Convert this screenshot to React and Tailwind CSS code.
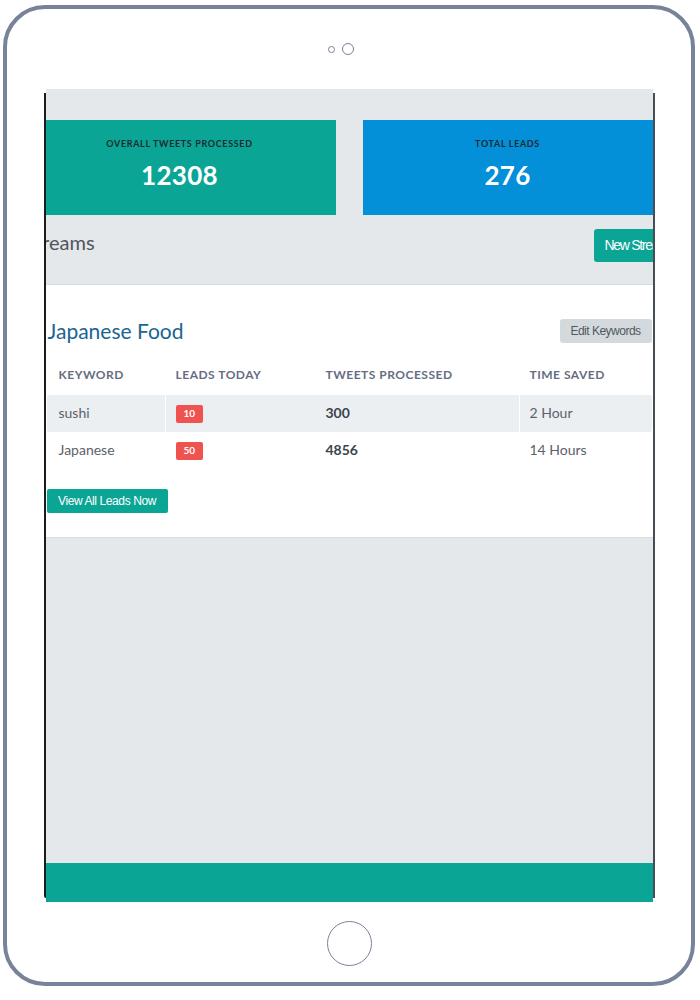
const stats = [
  { label: 'OVERALL TWEETS PROCESSED', value: '12308', cls: 'bg-[#0ba596] w-[312px]' },
  { label: 'TOTAL LEADS', value: '276', cls: 'bg-[#048fd9] w-[290px]' },
];

const rows = [
  { keyword: 'sushi', leads: 10, tweets: 300, saved: '2 Hour', striped: true },
  { keyword: 'Japanese', leads: 50, tweets: 4856, saved: '14 Hours', striped: false },
];

function StatCard({ label, value, cls }) {
  return (
    <div className={`${cls} h-[95px] shrink-0 flex flex-col items-center pt-[19px]`}>
      <div className="text-[9px] leading-[10px] font-bold tracking-[0.65px] text-[#1c2b30]">{label}</div>
      <div className="mt-[11px] text-[26px] leading-[30px] font-bold tracking-[0.3px] text-white">{value}</div>
    </div>
  );
}

function StreamTable() {
  return (
    <div className="w-full">
      <div className="flex h-[41px] items-center text-[12px] font-bold tracking-[0.5px] text-[#656d82]">
        <div className="w-[118px] pl-[12px]">KEYWORD</div>
        <div className="w-[150px] pl-[11px]">LEADS TODAY</div>
        <div className="w-[204px] pl-[11px]">TWEETS PROCESSED</div>
        <div className="flex-1 pl-[11px]">TIME SAVED</div>
      </div>
      {rows.map((r) => (
        <div key={r.keyword} className="flex h-[37px] text-[14px] text-[#5b626a]">
          <div className={`w-[118px] pl-[12px] flex items-center pb-[2px] ${r.striped ? 'bg-[#eceff2] rounded-l-[2px]' : ''}`}>{r.keyword}</div>
          <div className={`w-[150px] pl-[10px] flex items-center border-l border-white ${r.striped ? 'bg-[#eceff2]' : ''}`}>
            <span className="bg-[#ef5350] text-white text-[10px] font-bold rounded-[2px] h-[18px] px-[8px] flex items-center">{r.leads}</span>
          </div>
          <div className={`w-[204px] pl-[11px] flex items-center pb-[2px] font-bold text-[#3d434a] ${r.striped ? 'bg-[#eceff2]' : ''}`}>{r.tweets}</div>
          <div className={`flex-1 pl-[10px] flex items-center pb-[2px] border-l border-white ${r.striped ? 'bg-[#eceff2] rounded-r-[2px]' : ''}`}>{r.saved}</div>
        </div>
      ))}
    </div>
  );
}

export default function App() {
  return (
    <div className="w-[700px] h-[1000px] bg-white font-['Lato','Open_Sans',sans-serif]">
      <div className="ml-[3px] mt-[5px] w-[692px] h-[981px] border-[4px] border-[#78839a] rounded-[42px] flex flex-col items-center">
        {/* camera */}
        <div className="self-start ml-[321px] mt-[34px] h-[12px] flex items-center gap-[7px]">
          <div className="w-[7px] h-[7px] rounded-full border border-[#78839a]" />
          <div className="w-[12px] h-[12px] rounded-full border border-[#78839a]" />
        </div>

        {/* screen */}
        <div className="mt-[34px] h-[813px] w-[611px] flex">
          <div className="w-[2px] my-[4px] bg-[#1c1c1c] rounded-bl-[2px]" />
          <div className="w-[607px] h-full bg-[#e4e8eb] overflow-hidden flex flex-col">
            <div className="h-[196px] shrink-0 border-b border-[#d6dbdf] pt-[31px]">
              <div className="flex gap-[27px] -ml-[22px]">
                {stats.map((s) => (
                  <StatCard key={s.label} {...s} />
                ))}
              </div>
              <div className="flex items-start justify-between -ml-[21px] -mr-[47px] mt-[14px]">
                <div className="-mt-[1px] text-[20px] leading-[28px] text-[#4f555b]">Streams</div>
                <div className="w-[106px] h-[33px] bg-[#0ba596] rounded-[3px] pl-[11px] flex items-center text-white text-[14px] tracking-[-1.3px] font-['Liberation_Sans',Arial,sans-serif]">
                  New Streams
                </div>
              </div>
            </div>

            <div className="bg-white shrink-0 border-b border-[#d9dde1] px-[1px] pt-[33px] pb-[24px]">
              <div className="flex items-center justify-between h-[26px]">
                <div className="pl-[1px] text-[21px] leading-[26px] text-[#1a6592]">Japanese Food</div>
                <div className="h-[24px] w-[92px] bg-[#d3d9dd] rounded-[3px] flex items-center justify-center text-[12px] tracking-[-0.5px] text-[#505960] font-['Liberation_Sans',Arial,sans-serif]">
                  Edit Keywords
                </div>
              </div>
              <div className="mt-[10px]">
                <StreamTable />
              </div>
              <div className="mt-[20px] h-[24px] w-[121px] bg-[#0ba596] rounded-[2px] flex items-center justify-center text-white text-[12px] tracking-[-0.4px] font-['Liberation_Sans',Arial,sans-serif]">
                View All Leads Now
              </div>
            </div>

            <div className="flex-1" />
            <div className="h-[39px] shrink-0 bg-[#0ba596]" />
          </div>
          <div className="w-[2px] my-[4px] bg-[#474d55]" />
        </div>

        {/* home button */}
        <div className="mt-[19px] w-[45px] h-[45px] rounded-full border border-[#78839a]" />
      </div>
    </div>
  );
}
